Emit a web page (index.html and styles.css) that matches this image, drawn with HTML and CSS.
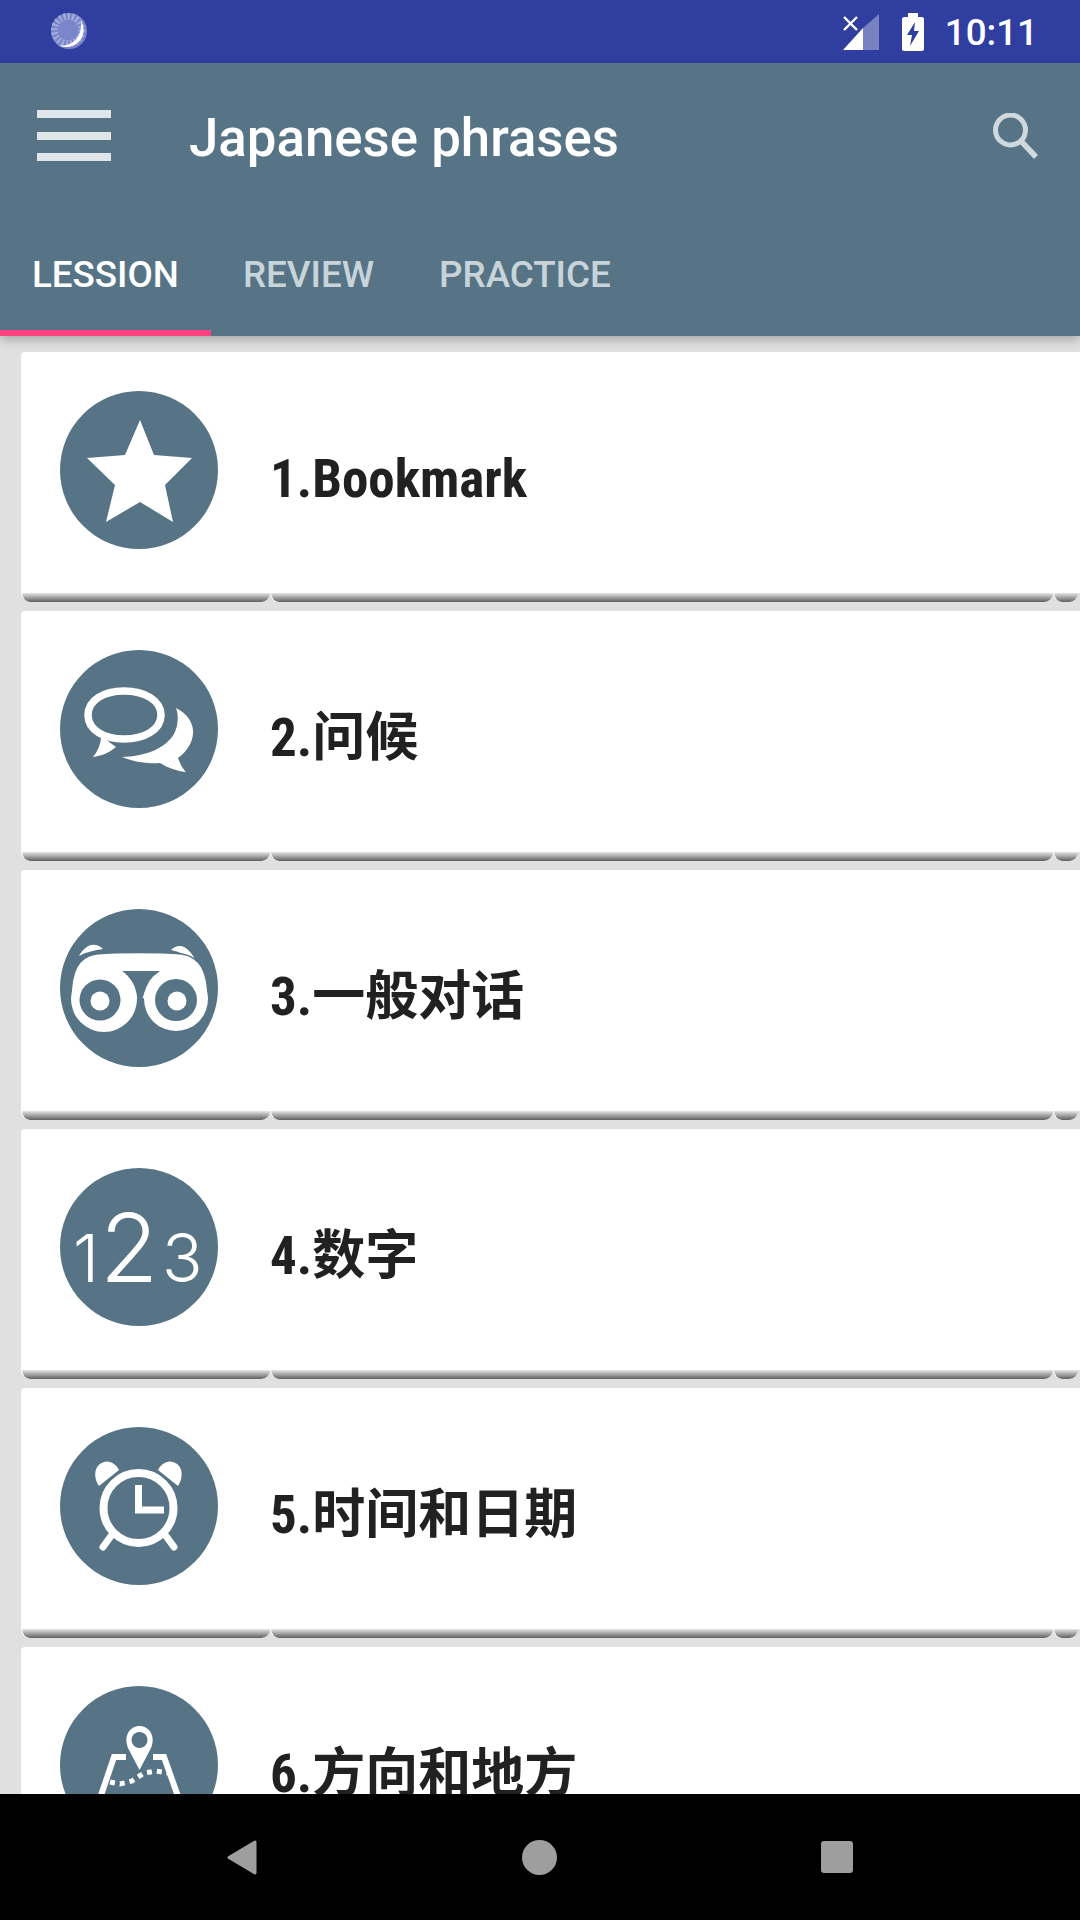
FILE: index.html
```html
<!DOCTYPE html>
<html lang="en">

<head>
    <meta charset="UTF-8">
    <meta name="viewport" content="width=device-width, initial-scale=1.0">
    <title>Japanese phrases</title>
    <link rel="stylesheet" href="styles.css">
</head>

<body>
    <div class="screen">
        <div class="status-bar">
            <svg class="spinner" width="38" height="38" viewBox="0 0 38 38">
                <circle cx="19" cy="19" r="18" fill="#7a86c9"/>
                <circle cx="18" cy="18" r="13.5" fill="none" stroke="#a3acdb" stroke-width="7" stroke-dasharray="2 2.2"/>
                <circle cx="18" cy="18" r="10" fill="#7a86c9"/>
                <path d="M31 9C36 17 34 30 22 34C17 36 12 35 8 33C19 36 33 27 31 9Z" fill="#fff"/>
            </svg>
            <div class="status-right">
                <svg class="signal" width="36" height="36" viewBox="0 0 36 36">
                    <path d="M36 0V36H20V14Z" fill="#fff" opacity="0.35"/>
                    <path d="M20 14V36H0Z" fill="#fff"/>
                    <path d="M1 3L14 16M14 3L1 16" stroke="#fff" stroke-width="2.4" fill="none"/>
                </svg>
                <svg class="battery" width="22" height="38" viewBox="0 0 22 38">
                    <path d="M6 0H16V4H20C21 4 22 5 22 6V36C22 37 21 38 20 38H2C1 38 0 37 0 36V6C0 5 1 4 2 4H6Z" fill="#fff"/>
                    <path d="M13 9L5 22H10L8 33L17 18H12Z" fill="#303f9f"/>
                </svg>
                <span class="clock">10:11</span>
            </div>
        </div>

        <header class="app-bar">
            <div class="toolbar">
                <div class="menu-icon">
                    <span></span>
                    <span></span>
                    <span></span>
                </div>
                <h1 class="page-title">Japanese phrases</h1>
                <svg class="search-icon" width="46" height="46" viewBox="0 0 46 46">
                    <circle cx="17.5" cy="17" r="15" fill="none" stroke="#cfd8dc" stroke-width="5"/>
                    <path d="M28 28L43 44" stroke="#cfd8dc" stroke-width="5.5" fill="none"/>
                </svg>
            </div>
            <nav class="tabs">
                <a class="tab active">LESSION</a>
                <a class="tab">REVIEW</a>
                <a class="tab">PRACTICE</a>
            </nav>
        </header>

        <main class="lesson-list">
            <div class="card">
                <div class="card-body">
                    <svg class="badge" viewBox="0 0 158 158">
                        <circle cx="79" cy="79" r="79" class="badge-bg"/>
                        <path d="M80 29L94 64L132 67L105 94L113 131L80 111L46 131L55 94L27 67L65 64Z" fill="#fff"/>
                    </svg>
                    <span class="lesson-name">1.Bookmark</span>
                </div>
                <div class="card-edge"><i></i><i></i><i></i></div>
            </div>

            <div class="card">
                <div class="card-body">
                    <svg class="badge" viewBox="0 0 158 158">
                        <circle cx="79" cy="79" r="79" class="badge-bg"/>
                        <path d="M28 65C28 50 44 41 64 41C84 41 101 50 101 65C101 80 84 89 64 89C44 89 28 80 28 65Z" fill="none" stroke="#fff" stroke-width="7.5"/>
                        <path d="M41 86C41 95 37 102 33 107C41 106 49 103 56 97Z" fill="#fff"/>
                        <path d="M116 58C128 64 134 74 133 84C132 94 126 102 118 108C120 113 122 118 126 122C117 121 108 118 100 113C87 114 74 112 62 107C84 106 104 100 114 84C118 76 119 66 116 58Z" fill="#fff"/>
                    </svg>
                    <span class="lesson-name">2.问候</span>
                </div>
                <div class="card-edge"><i></i><i></i><i></i></div>
            </div>

            <div class="card">
                <div class="card-body">
                    <svg class="badge" viewBox="0 0 158 158">
                        <circle cx="79" cy="79" r="79" class="badge-bg"/>
                        <path d="M19 47C23 40 29 35 35 36C38 36 41 38 43 40C35 41 26 43 19 47Z" fill="#fff"/>
                        <path d="M136 52C132 44 126 37 120 37C116 37 113 39 111 41C120 43 129 47 136 52Z" fill="#fff"/>
                        <path d="M11 90C11 62 18 48 36 45C60 43 98 43 122 45C140 48 148 62 148 90Z" fill="#fff" class="head"/>
                        <path d="M62 62H100C92 68 85 78 82 92H78C75 78 71 68 62 62Z" class="badge-bg"/>
                        <circle cx="44" cy="90" r="33" fill="#fff"/>
                        <circle cx="116" cy="90" r="32" fill="#fff"/>
                        <path d="M80 72C78 84 78 96 81 108" fill="none" class="eye-gap"/>
                        <circle cx="40" cy="91" r="20.5" class="badge-bg"/>
                        <circle cx="116" cy="91" r="21" class="badge-bg"/>
                        <circle cx="40" cy="92" r="9.5" fill="#fff"/>
                        <circle cx="117" cy="92" r="9.5" fill="#fff"/>
                    </svg>
                    <span class="lesson-name">3.一般对话</span>
                </div>
                <div class="card-edge"><i></i><i></i><i></i></div>
            </div>

            <div class="card">
                <div class="card-body">
                    <svg class="badge" viewBox="0 0 158 158">
                        <circle cx="79" cy="79" r="79" class="badge-bg"/>
                        <text class="badge-num" y="114"><tspan x="13" font-size="66">1</tspan><tspan x="40" font-size="95">2</tspan><tspan x="102" font-size="67">3</tspan></text>
                    </svg>
                    <span class="lesson-name">4.数字</span>
                </div>
                <div class="card-edge"><i></i><i></i><i></i></div>
            </div>

            <div class="card">
                <div class="card-body">
                    <svg class="badge" viewBox="0 0 158 158">
                        <circle cx="79" cy="79" r="79" class="badge-bg"/>
                        <circle cx="78.5" cy="81" r="35" fill="none" stroke="#fff" stroke-width="8"/>
                        <path d="M78.5 58V83H104" fill="none" stroke="#fff" stroke-width="7"/>
                        <path d="M39 59C33 50 34 38 44 35C50 33 56 37 59 43Z" fill="#fff"/>
                        <path d="M118 59C124 50 123 38 113 35C107 33 101 37 98 43Z" fill="#fff"/>
                        <path d="M51 109L43 120M106 109L114 120" stroke="#fff" stroke-width="7" stroke-linecap="round"/>
                    </svg>
                    <span class="lesson-name">5.时间和日期</span>
                </div>
                <div class="card-edge"><i></i><i></i><i></i></div>
            </div>

            <div class="card">
                <div class="card-body">
                    <svg class="badge" viewBox="0 0 158 158">
                        <circle cx="79" cy="79" r="79" class="badge-bg"/>
                        <path d="M79.5 84L68 62C63 50 70 40 79.5 40C89 40 96 50 91 62Z" fill="#fff"/>
                        <circle cx="79.5" cy="54" r="8" class="badge-bg"/>
                        <path d="M66 71H54L34 130M93 71H104L125 130" fill="none" stroke="#fff" stroke-width="6"/>
                        <path d="M50 96L60 98L72 95L84 87L96 85L108 87" fill="none" stroke="#fff" stroke-width="5" stroke-dasharray="5 5"/>
                    </svg>
                    <span class="lesson-name">6.方向和地方</span>
                </div>
                <div class="card-edge"><i></i><i></i><i></i></div>
            </div>
        </main>

        <div class="nav-bar">
            <svg width="32" height="35" viewBox="0 0 32 35">
                <path d="M29 2L3 17.5L29 33Z" fill="#9e9e9e" stroke="#9e9e9e" stroke-width="3" stroke-linejoin="round"/>
            </svg>
            <svg width="35" height="35" viewBox="0 0 35 35">
                <circle cx="17.5" cy="17.5" r="17.5" fill="#9e9e9e"/>
            </svg>
            <div class="recent-btn"></div>
        </div>
    </div>
</body>

</html>
```

FILE: styles.css
```css
* {
    margin: 0;
    padding: 0;
    box-sizing: border-box;
}

body {
    font-family: Roboto, "Noto Sans CJK SC", sans-serif;
    background-color: #e0e0e0;
}

.screen {
    width: 1080px;
    height: 1920px;
    display: flex;
    flex-direction: column;
    overflow: hidden;
}

.status-bar {
    height: 63px;
    flex-shrink: 0;
    display: flex;
    align-items: center;
    justify-content: space-between;
    padding: 0 42px 0 50px;
    background-color: #303f9f;
    color: #fff;
}

.spinner {
    margin-top: -1px;
}

.status-right {
    display: flex;
    align-items: center;
}

.signal {
    margin-top: 1px;
    margin-right: 23px;
}

.battery {
    margin-right: 21px;
}

.clock {
    font-size: 36.75px;
    font-weight: 500;
    margin-top: 2px;
}

.app-bar {
    position: relative;
    z-index: 1;
    flex-shrink: 0;
    background-color: #567485;
    box-shadow: 0 4px 10px rgba(0, 0, 0, 0.25);
}

.toolbar {
    height: 147px;
    display: flex;
    align-items: center;
    padding: 0 41px 0 37px;
}

.menu-icon {
    width: 74px;
    height: 51px;
    display: flex;
    flex-direction: column;
    justify-content: space-between;
    margin-top: -2px;
}

.menu-icon span {
    height: 8px;
    background-color: #dfe5e8;
}

.page-title {
    flex: 1;
    margin-left: 78px;
    margin-top: 3px;
    font-size: 52.8px;
    font-weight: 500;
    color: #fff;
}

.search-icon {
    margin-top: -2px;
}

.tabs {
    height: 126px;
    display: flex;
}

.tab {
    display: flex;
    align-items: center;
    padding: 2px 32px 0;
    font-size: 36.75px;
    font-weight: 500;
    color: #c9d4da;
}

.tab:last-child {
    margin-left: 1px;
}

.tab.active {
    color: #fff;
    box-shadow: inset 0 -6px 0 #ff4081;
}

.lesson-list {
    flex: 1;
    min-height: 0;
    overflow: hidden;
    padding: 16px 0 0 21px;
    display: flex;
    flex-direction: column;
    gap: 9px;
}

.card {
    flex-shrink: 0;
    height: 250px;
    background-color: #fff;
    border-radius: 4px 0 0 0;
}

.card-body {
    height: 241px;
    display: flex;
    align-items: flex-start;
    padding: 39px 0 0 39px;
}

.badge {
    width: 158px;
    height: 158px;
    flex-shrink: 0;
}

.badge-bg {
    fill: #567485;
}

.head {
    stroke: #567485;
    stroke-width: 1.5;
}

.eye-gap {
    stroke: #567485;
    stroke-width: 2;
}

.badge-num {
    font-family: Inter, sans-serif;
    font-weight: 300;
    fill: #fff;
}

.lesson-name {
    margin: 9px 0 0 52px;
    font-size: 53px;
    line-height: 158px;
    font-weight: 700;
    font-stretch: 75%;
    color: #212121;
}

.card-edge {
    height: 9px;
    display: flex;
    background-color: #e0e0e0;
}

.card-edge i {
    height: 100%;
    background: linear-gradient(#e6e6e6, #5f5f5f);
    background-clip: padding-box;
    border-left: 1px solid #fff;
    border-radius: 0 0 9px 9px;
}

.card-edge i:nth-child(1) {
    width: 249px;
}

.card-edge i:nth-child(2) {
    width: 783px;
}

.card-edge i:nth-child(3) {
    width: 25px;
}

.nav-bar {
    position: relative;
    z-index: 1;
    height: 126px;
    flex-shrink: 0;
    display: flex;
    align-items: center;
    justify-content: space-between;
    padding: 0 227px 0 226px;
    background-color: #000;
}

.recent-btn {
    width: 32px;
    height: 32px;
    border-radius: 3px;
    background-color: #9e9e9e;
}
```
